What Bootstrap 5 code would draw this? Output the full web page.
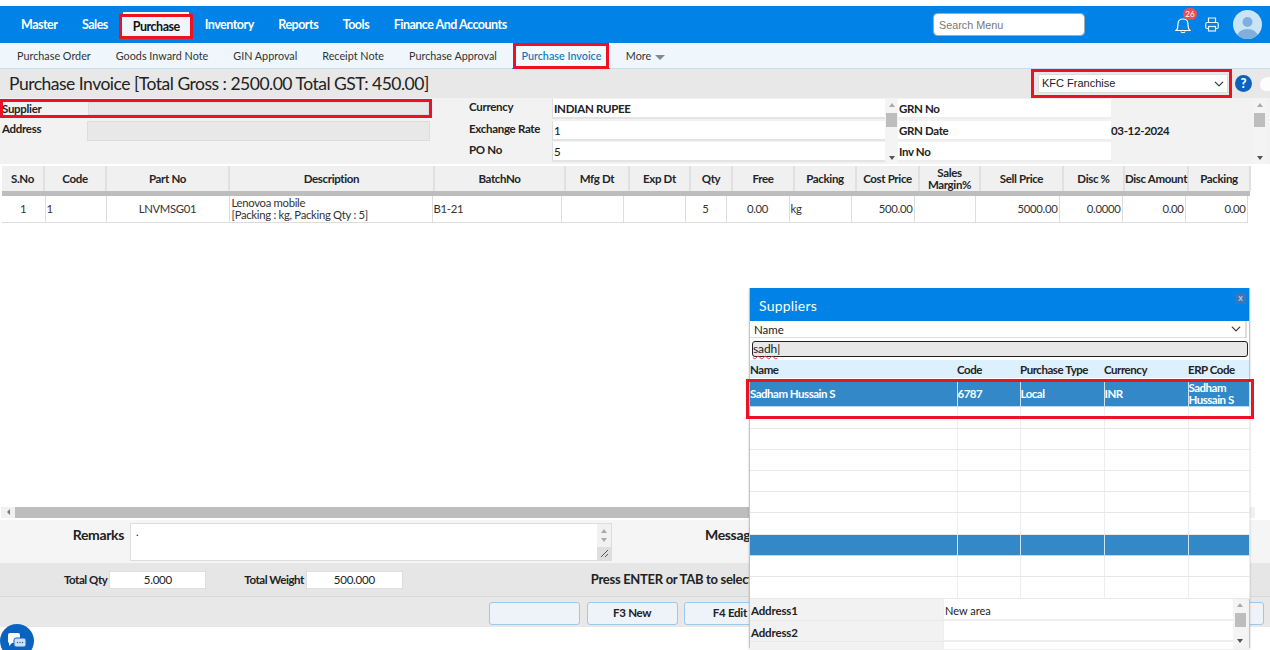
<!DOCTYPE html>
<html lang="en">
<head>
<meta charset="utf-8">
<title>Purchase Invoice</title>
<link href="https://cdn.jsdelivr.net/npm/bootstrap@5.3.0/dist/css/bootstrap.min.css" rel="stylesheet">
<style>
html,body{height:650px;overflow:hidden}
body{font-family:Lato,"Liberation Sans",sans-serif;font-size:12px;color:#222;background:#fff;position:relative;padding-top:6px}
.red-box{outline:3px solid #ee1122;outline-offset:0}
.main-bar{background:#0082e6;height:37px;padding:0 0 0 21px;flex-wrap:nowrap}
.main-bar .nav-link{color:#fff;font-weight:700;font-size:12.5px;padding:0;letter-spacing:-.5px;line-height:37px}
.main-menu{gap:24.5px}
.main-menu .active-tab{background:#eef6fc;color:#111;line-height:19px;padding:0 10.5px;margin:3px -10px 0;box-shadow:0 -6px 0 -1px #eef6fc}
.menu-search{width:152px;height:23px;font-size:10.8px;padding:0 5px;border-radius:4px;border:1px solid #9ab;margin-right:90px;font-family:"Liberation Sans",sans-serif}
.menu-search::placeholder{color:#777}
.top-icons{gap:14px;margin-right:8px}
.bell-wrap{position:relative;width:16px;height:20px}
.bell-count{position:absolute;top:-7px;left:8px;background:#ee4d55;color:#fff;font-size:8px;line-height:12px;width:14px;height:12px;border-radius:6px;text-align:center}
.sub-bar{background:#eff7fd;height:25px;margin-top:1px;border-bottom:1px solid #c3e0f2;padding-left:17px;gap:25px;flex-wrap:nowrap}
.sub-bar .nav-link{color:#333;font-size:10.8px;padding:0;line-height:24px;white-space:nowrap}
.sub-bar .cur-tab{color:#0a72c4;font-weight:500;padding:0 5px;margin:0 -5px;height:20px;line-height:20px;background:#f4fafe}
.tab-under{height:25px;display:flex;align-items:center;border-bottom:1px solid #2a86d0;margin:0 -9.5px;padding:0 9px}
.caret-down{display:inline-block;border:5px solid transparent;border-top:5px solid #888;border-bottom:0;margin-left:1px;vertical-align:middle}
.title-bar{background:#e8e8e8;height:29px}
.page-title{font-size:17.5px;font-weight:400;margin:0 0 0 9px;line-height:29px;color:#222;letter-spacing:-.5px}
.org-wrap{padding:2px 1px 2px 4px;width:195px;height:23px;margin-right:6px}
.org-select{width:190px;height:19px;font-size:11px;font-family:"Liberation Sans",sans-serif;padding:0 0 0 3px;border-radius:0;border:1px solid #ddd;background-position:right 3px center;background-size:10px 10px;color:#222}
.help-dot{width:17px;height:17px;border-radius:50%;background:#0b62bf;color:#fff;font-weight:900;font-size:13px;line-height:17px;text-align:center}
.white-blob{width:10px;height:14px;margin-left:8px;background:#fff;border-radius:8px 0 0 6px;opacity:.9}
.form-area{background:#f2f2f2;height:66px;overflow:hidden}
.left-pane{width:430px;flex:none}
.lbl{font-weight:700;font-size:11.5px;letter-spacing:-.3px;color:#222}
.left-line{display:flex}
.left-line .lbl{width:87px;padding-left:2px;line-height:15px}
.grey-field{flex:1;background:#e8e8e8;border:1px solid #ddd}
.left-a{height:13px;margin:4px 0 0 3px;width:426px}
.left-a .lbl{width:87px;margin-left:-2px;padding-left:1px;line-height:13px}
.left-b{height:20px;margin-top:6px}
.mid-pane{width:416px;margin-left:39px;flex:none;padding-top:1px}
.mid-line{display:flex;height:21.5px}
.mid-line .lbl{width:83px;line-height:16px}
.white-field{flex:1;background:#fff;border-bottom:2px solid #e4e4e4;border-left:1px solid #ddd;height:20px;font-weight:700;font-size:11.5px;line-height:20px;letter-spacing:-.3px;padding-left:1px}
.mid-line .plain{font-weight:500}
.thin-bar{width:13px;flex:none;display:flex;flex-direction:column;align-items:center;height:66px;background:#f4f4f4;padding-top:1px}
.thin-bar i{display:block;width:0;height:0;border:3px solid transparent;margin:4px 0}
.up-arrow{border-bottom:4px solid #aaa!important;border-top:0!important}
.down-arrow{border-top:4px solid #555!important;border-bottom:0!important}
.thin-thumb{width:11px;height:14px;background:#bdbdbd;margin-top:2px}
.thin-gap{flex:1}
.right-pane{width:355px;flex:none;padding-top:1px}
.right-line{display:flex;height:21.5px}
.right-line .lbl{width:213px;background:#fff;padding-left:1px;height:20px;line-height:20px;border-bottom:2px solid #eee;letter-spacing:-.35px}
.right-val{flex:1;font-weight:700;font-size:11.5px;line-height:20px;letter-spacing:-.35px}
.grid-table{table-layout:fixed;margin:0;border-collapse:collapse;font-size:11.5px}
.head-table{width:1248px;margin:2px 0 0 2px}
.head-table th{background:#f0f0f0;height:25px;padding:1px 0 0;text-align:center;font-weight:700;letter-spacing:-.35px;line-height:12px;border-right:2px solid #e0e0e0;border-bottom:0;vertical-align:middle;white-space:nowrap}
.head-table th.may-wrap{white-space:normal}
.sep-line{height:5px;background:#bdbdbd;width:1248px;margin-left:2px}
.body-table{width:1245px;margin-left:2px}
.body-table td{height:26px;padding:1px 1px 0;border-right:1px solid #ddd;border-bottom:1px solid #ddd;line-height:12px;vertical-align:middle;color:#333;letter-spacing:-.3px;font-size:11.3px}
.body-table td.desc-cell{padding:0 1px 0 2px}
.grid-gap{height:284px}
.h-scroll{height:11px;margin:0 15px 0 1px;display:flex;background:#f1f1f1}
.h-arrow{width:14px;display:flex;align-items:center;justify-content:center}
.h-arrow i{display:block;border:3px solid transparent;border-right:3px solid #777;border-left:0}
.h-thumb{width:1225px;background:#bdbdbd}
.remark-row{background:#f5f5f5;height:43px;margin-top:2px;padding-top:3px}
.remark-lbl{width:124px;text-align:right;font-size:14px;font-weight:700;letter-spacing:-.35px;line-height:24px;color:#222}
.remark-box{width:482px;height:38px;margin-left:6px;background:#fff;border:1px solid #ddd;display:flex;justify-content:space-between;padding-left:5px;font-size:11px}
.remark-bar{width:14px;background:#f1f1f1;display:flex;flex-direction:column;align-items:center;padding-top:5px}
.remark-bar i{display:block;border:3px solid transparent;margin-bottom:5px}
.remark-bar .down-arrow{border-top-color:#aaa!important}
.grip-box{margin-top:auto;width:14px;height:13px;background:#dedede;display:flex;align-items:center;justify-content:center}
.msg-lbl{font-size:14px;font-weight:700;letter-spacing:-.35px;line-height:24px;margin-left:93px;white-space:nowrap}
.total-row{background:#e6e6e6;height:34px;border-bottom:1px solid #d8d8d8;padding-top:1px}
.total-lbl{font-weight:700;font-size:11.5px;letter-spacing:-.45px}
.qty-lbl{margin-left:64px}
.wgt-lbl{margin-left:38px}
.total-val{width:97px;height:18px;background:#fff;border:1px solid #ddd;text-align:center;font-size:11.5px;line-height:16px;margin-left:2px;letter-spacing:-.2px}
.press-txt{font-size:13px;font-weight:700;letter-spacing:-.3px;margin-left:188px;white-space:nowrap}
.btn-row{background:#e8e8e8;height:30px;gap:6.7px;padding:5px 0 0 489px}
.act-btn{width:91px;height:23px;padding:0;font-size:11.5px;font-weight:700;letter-spacing:-.3px;background:#edf3f9;border:1px solid #9cc8ec;border-radius:3px;color:#222;flex:none}
.chat-dot{position:absolute;left:0;top:624px;width:34px;height:34px;border-radius:50%;background:#0b63c0;display:flex;align-items:center;justify-content:center}
.supplier-pop{position:absolute;left:749px;top:288px;width:501px;height:360px;background:#fff;border:1px solid #c4c4c4;border-top:0;box-shadow:0 1px 2px rgba(0,0,0,.2)}
.pop-head{background:#0082e6;color:#fff;height:33px;font-size:14px;padding-left:9px;line-height:36px;letter-spacing:.2px;position:relative}
.pop-x{position:absolute;right:3px;top:5px;width:11px;height:11px;background:#3a78b5;color:#dde;font-size:9px;line-height:10px;text-align:center}
.pop-select{display:block;height:17px;width:497px;font-size:11.5px;padding:0 0 0 4px;border:0;border-radius:0;border-bottom:1px solid #ddd;border-right:2px solid #ddd;background-position:right 4px center;background-size:10px 10px;color:#222}
.pop-search{width:496px;height:16px;margin:3px 0 3px 2px;background:#e8e8e8;border:1.5px solid #222;border-radius:3px;font-size:12px;padding:0;line-height:13px;letter-spacing:-.1px}
.pop-search span{text-decoration:underline wavy #e33 1px;text-underline-offset:2px}
.pop-table{width:499px;table-layout:fixed;margin:0;border-collapse:collapse;font-size:11.5px}
.pop-table th{background:#dcf0fd;height:18px;padding:2px 0 0;font-weight:700;letter-spacing:-.45px;border:0;vertical-align:middle;color:#222;line-height:16px;white-space:nowrap}
.pop-table td{height:21px;padding:0;border-right:1px solid #eee;border-bottom:1px solid #e8e8e8;line-height:12px;vertical-align:middle;background:#fff}
.pop-table .row-on td{background:#3388c8;color:#fff;font-weight:700;letter-spacing:-.5px;border-right-color:#cfe3f2;border-bottom-color:#bcd9ee}
.pop-table .row-sp td{height:4px;border:0}
.pop-table .row-a td{height:24px}
.pop-table .row-b td{height:13px}
.pop-table .row-c td{height:9px;border-bottom:0}
.pop-table .row-d td{height:22px}
.pop-mark{position:absolute;left:-4px;top:91px;width:508px;height:40px;border:3px solid #ee1122;pointer-events:none}
.addr-pane{background:#f2f2f2;height:50px;display:flex;overflow:hidden}
.addr-lbls{width:193px;font-weight:700;letter-spacing:-.15px;font-size:11.5px;flex:none}
.addr-lbls div{height:21.5px;line-height:23px;padding-left:1px;border-bottom:1px solid #e8e8e8}
.addr-vals{width:290px;font-size:11px;flex:none}
.addr-vals div{height:21.5px;line-height:23px;padding-left:1px;background:#fff;border-bottom:2px solid #eee;border-left:1px solid #eee}
.addr-bar{width:14px;height:46px;padding-top:0}
.addr-bar i{margin:4px 0 2px}
.addr-bar .thin-thumb{margin-top:4px}
</style>
</head>
<body>
<nav class="navbar main-bar d-flex align-items-center justify-content-between">
  <ul class="nav main-menu flex-nowrap align-items-center">
    <li class="nav-item"><a class="nav-link" href="#">Master</a></li>
    <li class="nav-item"><a class="nav-link" href="#">Sales</a></li>
    <li class="nav-item"><a class="nav-link active-tab red-box" href="#">Purchase</a></li>
    <li class="nav-item"><a class="nav-link" href="#">Inventory</a></li>
    <li class="nav-item"><a class="nav-link" href="#">Reports</a></li>
    <li class="nav-item"><a class="nav-link" href="#">Tools</a></li>
    <li class="nav-item"><a class="nav-link" href="#">Finance And Accounts</a></li>
  </ul>
  <div class="d-flex align-items-center">
    <input class="form-control menu-search" placeholder="Search Menu">
    <div class="d-flex align-items-center top-icons">
      <div class="bell-wrap">
        <svg width="16" height="20" viewBox="0 0 16 20" fill="none" stroke="#fff" stroke-width="1.2"><path d="M1 15.5c2-1.5 2-3.5 2-6.5 0-3 2-5 5-5s5 2 5 5c0 3 0 5 2 6.5z"/><path d="M6 16.5c0 1.6 4 1.6 4 0"/></svg>
        <span class="bell-count">26</span>
      </div>
      <svg width="14" height="15" viewBox="0 0 14 15" fill="none" stroke="#e8f2fb" stroke-width="1.2"><path d="M3.5 5.5V1h7v4.5"/><rect x=".7" y="5.5" width="12.6" height="6" rx="1.5"/><rect x="3.5" y="9.5" width="7" height="4.5" fill="#0082e6"/></svg>
      <svg width="29" height="29" viewBox="0 0 29 29"><defs><clipPath id="avatarClip"><circle cx="14.5" cy="14.5" r="14.5"/></clipPath></defs><circle cx="14.5" cy="14.5" r="14.5" fill="#c9e4f6"/><g clip-path="url(#avatarClip)" fill="#7fb0dc"><circle cx="14.5" cy="12" r="5"/><ellipse cx="14.5" cy="27" rx="10.5" ry="8"/></g></svg>
    </div>
  </div>
</nav>

<ul class="nav sub-bar align-items-center">
  <li class="nav-item"><a class="nav-link" href="#">Purchase Order</a></li>
  <li class="nav-item"><a class="nav-link" href="#">Goods Inward Note</a></li>
  <li class="nav-item"><a class="nav-link" href="#">GIN Approval</a></li>
  <li class="nav-item"><a class="nav-link" href="#">Receipt Note</a></li>
  <li class="nav-item"><a class="nav-link" href="#">Purchase Approval</a></li>
  <li class="nav-item tab-under"><a class="nav-link cur-tab red-box" href="#">Purchase Invoice</a></li>
  <li class="nav-item"><a class="nav-link" href="#">More <span class="caret-down"></span></a></li>
</ul>

<div class="title-bar d-flex align-items-center justify-content-between">
  <h1 class="page-title">Purchase Invoice [Total Gross : 2500.00 Total GST: 450.00]</h1>
  <div class="d-flex align-items-center">
    <div class="org-wrap red-box"><select class="form-select org-select"><option>KFC Franchise</option></select></div>
    <div class="help-dot">?</div>
    <div class="white-blob"></div>
  </div>
</div>

<div class="form-area d-flex">
  <div class="left-pane">
    <div class="left-line left-a red-box"><div class="lbl">Supplier</div><div class="grey-field"></div></div>
    <div class="left-line left-b"><div class="lbl">Address</div><div class="grey-field"></div></div>
  </div>
  <div class="mid-pane">
    <div class="mid-line"><div class="lbl">Currency</div><div class="white-field">INDIAN RUPEE</div></div>
    <div class="mid-line"><div class="lbl">Exchange Rate</div><div class="white-field plain">1</div></div>
    <div class="mid-line"><div class="lbl">PO No</div><div class="white-field plain">5</div></div>
  </div>
  <div class="thin-bar"><i class="up-arrow"></i><div class="thin-thumb"></div><div class="thin-gap"></div><i class="down-arrow"></i></div>
  <div class="right-pane">
    <div class="right-line"><div class="lbl">GRN No</div><div class="right-val"></div></div>
    <div class="right-line"><div class="lbl">GRN Date</div><div class="right-val">03-12-2024</div></div>
    <div class="right-line"><div class="lbl">Inv No</div><div class="right-val"></div></div>
  </div>
  <div class="thin-bar"><i class="up-arrow"></i><div class="thin-thumb"></div><div class="thin-gap"></div><i class="down-arrow"></i></div>
</div>

<table class="table grid-table head-table">
  <colgroup><col width="42"><col width="62"><col width="123"><col width="205"><col width="131"><col width="64"><col width="61"><col width="42"><col width="62"><col width="62"><col width="63"><col width="61"><col width="83"><col width="61"><col width="64"><col width="62"></colgroup>
  <thead><tr><th>S.No</th><th>Code</th><th>Part No</th><th>Description</th><th>BatchNo</th><th>Mfg Dt</th><th>Exp Dt</th><th>Qty</th><th>Free</th><th>Packing</th><th>Cost Price</th><th class="may-wrap">Sales Margin%</th><th>Sell Price</th><th>Disc %</th><th>Disc Amount</th><th>Packing</th></tr></thead>
</table>
<div class="sep-line"></div>
<table class="table grid-table body-table">
  <colgroup><col width="43"><col width="61"><col width="123"><col width="203"><col width="129"><col width="62"><col width="62"><col width="41"><col width="63"><col width="62"><col width="63"><col width="61"><col width="84"><col width="63"><col width="63"><col width="62"></colgroup>
  <tbody><tr>
    <td class="text-center">1</td><td>1</td><td class="text-center">LNVMSG01</td><td class="desc-cell">Lenovoa mobile<br>[Packing : kg, Packing Qty : 5]</td><td>B1-21</td><td></td><td></td><td class="text-center">5</td><td class="text-center">0.00</td><td>kg</td><td class="text-end">500.00</td><td></td><td class="text-end">5000.00</td><td class="text-end">0.0000</td><td class="text-end">0.00</td><td class="text-end">0.00</td>
  </tr></tbody>
</table>
<div class="grid-gap"></div>
<div class="h-scroll"><div class="h-arrow"><i></i></div><div class="h-thumb"></div></div>

<div class="remark-row d-flex">
  <div class="remark-lbl">Remarks</div>
  <div class="remark-box"><span>.</span><div class="remark-bar"><i class="up-arrow"></i><i class="down-arrow"></i><div class="grip-box"><svg width="9" height="9" viewBox="0 0 9 9" stroke="#555" stroke-width="1"><path d="M1 8 8 1M5 8l3-3"/></svg></div></div></div>
  <div class="msg-lbl">Message</div>
</div>
<div class="total-row d-flex align-items-center">
  <div class="total-lbl qty-lbl">Total Qty</div><div class="total-val">5.000</div>
  <div class="total-lbl wgt-lbl">Total Weight</div><div class="total-val">500.000</div>
  <div class="press-txt">Press ENTER or TAB to select</div>
</div>
<div class="btn-row d-flex">
  <button class="btn act-btn"></button>
  <button class="btn act-btn">F3 New</button>
  <button class="btn act-btn">F4 Edit</button>
  <button class="btn act-btn"></button>
  <button class="btn act-btn"></button>
  <button class="btn act-btn"></button>
  <button class="btn act-btn"></button>
  <button class="btn act-btn"></button>
</div>

<div class="chat-dot">
  <svg width="20" height="18" viewBox="0 0 20 18"><path d="M1 3a2 2 0 0 1 2-2h8a2 2 0 0 1 2 2v6a2 2 0 0 1-2 2H5l-3 3V11a2 2 0 0 1-1-2z" fill="#fff"/><rect x="7" y="6" width="12" height="9" rx="2" fill="#cfe2f5" stroke="#0b63c0"/><circle cx="10.5" cy="10.5" r=".7" fill="#0b63c0"/><circle cx="13" cy="10.5" r=".7" fill="#0b63c0"/><circle cx="15.5" cy="10.5" r=".7" fill="#0b63c0"/></svg>
</div>

<div class="supplier-pop">
  <div class="pop-head">Suppliers<span class="pop-x">x</span></div>
  <select class="form-select pop-select"><option>Name</option></select>
  <div class="pop-search"><span>sadh</span>|</div>
  <table class="table pop-table">
    <colgroup><col width="207"><col width="63"><col width="84"><col width="84"><col width="61"></colgroup>
    <thead><tr><th>Name</th><th>Code</th><th>Purchase Type</th><th>Currency</th><th>ERP Code</th></tr></thead>
    <tbody>
      <tr class="row-sp"><td></td><td></td><td></td><td></td><td></td></tr>
      <tr class="row-on row-a"><td>Sadham Hussain S</td><td>6787</td><td>Local</td><td>INR</td><td>Sadham Hussain S</td></tr>
      <tr class="row-c"><td></td><td></td><td></td><td></td><td></td></tr>
      <tr class="row-b"><td></td><td></td><td></td><td></td><td></td></tr>
      <tr><td></td><td></td><td></td><td></td><td></td></tr>
      <tr><td></td><td></td><td></td><td></td><td></td></tr>
      <tr><td></td><td></td><td></td><td></td><td></td></tr>
      <tr><td></td><td></td><td></td><td></td><td></td></tr>
      <tr class="row-d"><td></td><td></td><td></td><td></td><td></td></tr>
      <tr class="row-on"><td></td><td></td><td></td><td></td><td></td></tr>
      <tr><td></td><td></td><td></td><td></td><td></td></tr>
      <tr class="row-d"><td></td><td></td><td></td><td></td><td></td></tr>
    </tbody>
  </table>
  <div class="addr-pane">
    <div class="addr-lbls"><div>Address1</div><div>Address2</div><div></div></div>
    <div class="addr-vals"><div>New area</div><div></div><div></div></div>
    <div class="thin-bar addr-bar"><i class="up-arrow"></i><div class="thin-thumb"></div><div class="thin-gap"></div><i class="down-arrow"></i></div>
  </div>
  <div class="pop-mark"></div>
</div>
</body>
</html>
